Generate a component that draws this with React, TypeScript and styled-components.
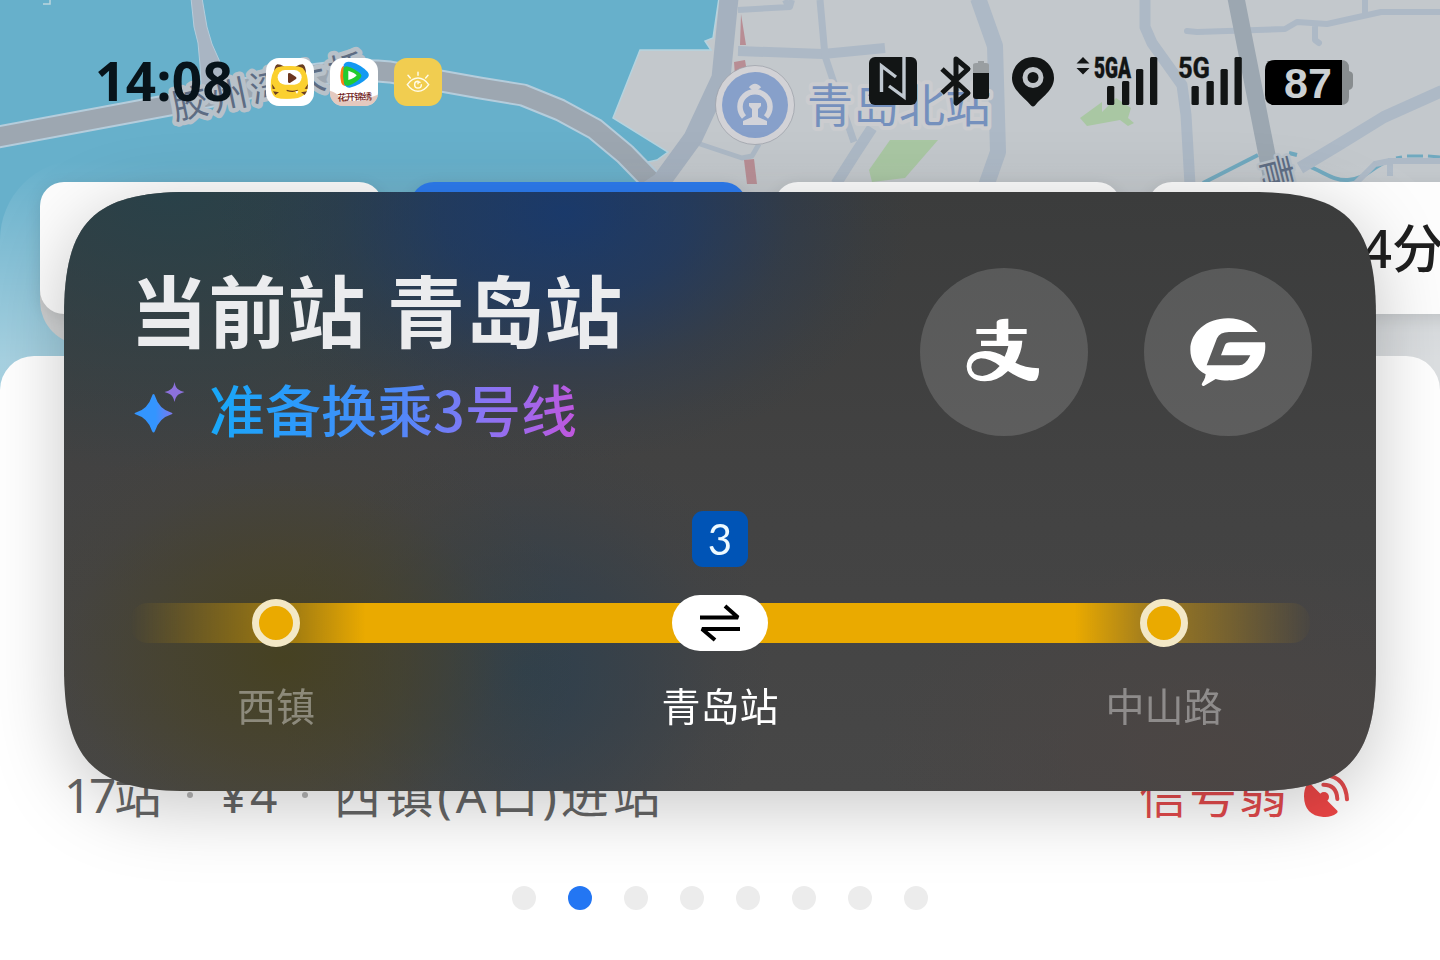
import styled, { createGlobalStyle, css } from "styled-components";

const GlobalStyle = createGlobalStyle`
  * {
    box-sizing: border-box;
  }

  body {
    margin: 0;
    font-family: "Noto Sans", "Noto Sans CJK SC", sans-serif;
  }
`;

const Screen = styled.main`
  position: relative;
  width: 1440px;
  height: 960px;
  overflow: hidden;
  background: #67b0cb;
`;

const MapCanvas = styled.svg`
  position: absolute;
  inset: 0;
  font-family: "Noto Sans CJK SC", sans-serif;
`;

const MapFade = styled.div`
  position: absolute;
  inset: 160px 0 0;
  border-radius: 80px 80px 0 0;
  background: linear-gradient(
    rgba(255, 255, 255, 0) 0,
    rgba(255, 255, 255, 0.06) 30px,
    rgba(255, 255, 255, 0.42) 200px
  );
`;

const Page = styled.div`
  position: relative;
  display: flex;
  flex-direction: column;
  height: 100%;
`;

const StatusBar = styled.header`
  display: flex;
  flex: none;
  justify-content: space-between;
  height: 182px;
  padding: 56px 87px 0 95px;
`;

const StatusGroup = styled.div<{ gap: number }>`
  display: flex;
  align-items: center;
  height: 50px;
  gap: ${(props) => props.gap}px;
`;

const Clock = styled.time`
  width: 155px;
  margin-top: -1px;
  color: #07131a;
  font: 700 53px/50px "Noto Sans", sans-serif;
  letter-spacing: 0.4px;
`;

const StatusSvg = styled.svg`
  flex: none;
  height: 50px;
  overflow: visible;
  fill: #121515;
`;

const AppIcon = styled.svg`
  flex: none;
  width: 48px;
  height: 48px;
  margin-top: 2px;
  border-radius: 13px;
`;

const Tabs = styled.nav`
  display: flex;
  flex: none;
  gap: 27px;
  width: 1500px;
  height: 174px;
  padding-left: 40px;
  isolation: isolate;
`;

const Tab = styled.div<{ active?: boolean; stacked?: boolean; width: number }>`
  position: relative;
  display: flex;
  flex: none;
  align-items: center;
  justify-content: flex-end;
  width: ${(props) => props.width}px;
  height: 132px;
  padding-right: 56px;
  border-radius: 24px;
  background: ${(props) => (props.active ? "#2d7cf0" : "#fdfdfd")};
  box-shadow: 0 4px 16px rgba(0, 0, 0, 0.1);
  color: #1f1f1f;
  font: 500 52px/1 "Noto Sans", "Noto Sans CJK SC", sans-serif;
  white-space: nowrap;

  /* a second card peeking out from under this one */
  ${(props) =>
    props.stacked &&
    css`
      &::before {
        content: "";
        position: absolute;
        inset: 60px 0 -31px;
        z-index: -1;
        border-radius: 0 0 44px 44px;
        background: #d2d4d5;
      }
    `}
`;

const Sheet = styled.section`
  display: flex;
  flex: 1;
  flex-direction: column;
  align-items: center;
  padding: 410px 91px 0 64px;
  border-radius: 34px 34px 0 0;
  background: #fff;
`;

const RouteInfo = styled.div`
  display: flex;
  align-items: center;
  align-self: stretch;
  height: 58px;
  color: #666;
  font: 400 48px/58px "Noto Sans", "Noto Sans CJK SC", sans-serif;
  white-space: nowrap;
`;

const RouteText = styled.span<{ spacing: number }>`
  letter-spacing: ${(props) => props.spacing}px;
`;

const Bullet = styled.i<{ left: number; right: number }>`
  width: 6px;
  height: 6px;
  margin: 0 ${(props) => props.right}px 0 ${(props) => props.left}px;
  border-radius: 50%;
  background: #b5b5b5;
`;

const WeakSignal = styled.div`
  display: flex;
  align-items: center;
  gap: 15px;
  margin-right: -1px;
  margin-left: auto;
  color: #e34a4c;
  letter-spacing: 2px;
`;

const Pager = styled.div`
  display: flex;
  gap: 32px;
  margin-top: 62px;
  /* the sheet padding is uneven, this brings the dots back to the middle */
  padding-left: 27px;
`;

const PagerDot = styled.span<{ active: boolean }>`
  width: 24px;
  height: 24px;
  border-radius: 50%;
  background: ${(props) => (props.active ? "#2376f3" : "#ececec")};
`;

const PanelShadow = styled.div`
  position: absolute;
  top: 192px;
  left: 64px;
  filter: drop-shadow(0 16px 36px rgba(0, 0, 0, 0.22));
`;

const Panel = styled.article`
  display: flex;
  flex-direction: column;
  width: 1312px;
  height: 599px;
  padding: 76px 66px 0;
  clip-path: path(
    "M0 124 C0 30 30 0 124 0 H1188 C1282 0 1312 30 1312 124 V475 C1312 569 1282 599 1188 599 H124 C30 599 0 569 0 475 Z"
  );
  background: radial-gradient(
      ellipse 350px 250px at 500px 20px,
      rgba(22, 57, 112, 0.88),
      rgba(24, 57, 108, 0.66) 35%,
      rgba(28, 57, 98, 0.28) 65%,
      rgba(32, 58, 88, 0.08) 87%,
      transparent
    ),
    radial-gradient(
      ellipse 460px 280px at 110px 0,
      rgba(38, 66, 75, 0.85),
      rgba(40, 66, 75, 0.4) 55%,
      transparent
    ),
    radial-gradient(
      ellipse 290px 240px at 220px 465px,
      rgba(70, 65, 32, 0.95),
      rgba(72, 66, 38, 0.62) 42%,
      rgba(72, 66, 48, 0.2) 75%,
      transparent
    ),
    radial-gradient(
      ellipse 250px 240px at 460px 480px,
      rgba(42, 63, 79, 0.85),
      rgba(46, 62, 76, 0.5) 45%,
      rgba(52, 62, 73, 0.15) 78%,
      transparent
    ),
    radial-gradient(
      ellipse 340px 200px at 1150px 560px,
      rgba(76, 69, 67, 0.85),
      transparent
    ),
    linear-gradient(#3b3c3c, #424242 45%, #474747);
`;

const PanelHeader = styled.header`
  display: flex;
  justify-content: space-between;
  height: 235px;
`;

const Title = styled.h1`
  margin: 0;
  color: #ebecee;
  font: 700 78px/80px "Noto Sans CJK SC", sans-serif;
  letter-spacing: 0.6px;
  word-spacing: 3px;
`;

const Hint = styled.div`
  display: flex;
  align-items: flex-start;
  margin-top: 34px;
  padding-left: 4px;
`;

const HintText = styled.p`
  margin: -9px 0 0 23px;
  background: linear-gradient(
    100deg,
    #16a9f8 0%,
    #2f98fb 28%,
    #5088f8 52%,
    #8a74f3 75%,
    #c255dd 100%
  );
  background-clip: text;
  color: transparent;
  font: 500 56px/70px "Noto Sans CJK SC", sans-serif;
`;

const Actions = styled.div`
  display: flex;
  gap: 56px;
  margin-right: -2px;
`;

const RoundButton = styled.button`
  width: 168px;
  height: 168px;
  padding: 0;
  border: 0;
  border-radius: 50%;
  background: rgba(255, 255, 255, 0.15);

  svg {
    display: block;
    fill: #fff;
  }
`;

const Line = styled.div`
  display: flex;
  justify-content: space-between;
  padding: 0 82px;
`;

const Stop = styled.div`
  display: flex;
  flex-direction: column;
  align-items: center;
  width: 128px;
`;

const BadgeSlot = styled.div`
  height: 84px;
`;

const LineBadge = styled.span`
  display: block;
  width: 56px;
  height: 56px;
  margin-top: 8px;
  border-radius: 11px;
  background: #0054b6;
  color: #eefaff;
  font: 400 42px/56px Lato, sans-serif;
  text-align: center;
`;

const Track = styled.div`
  display: flex;
  align-items: center;
  justify-content: space-between;
  height: 40px;
  margin-top: 16px;
  padding: 0 122px;
  border-radius: 18px;
  background: linear-gradient(
    90deg,
    rgba(234, 170, 0, 0) 0,
    rgba(234, 170, 0, 0.42) 122px,
    rgba(234, 170, 0, 0.6) 170px,
    #eaaa00 235px,
    #eaaa00 945px,
    rgba(234, 170, 0, 0.6) 1010px,
    rgba(234, 170, 0, 0.42) 1058px,
    rgba(234, 170, 0, 0.02) 1180px
  );
`;

const StopDot = styled.span`
  width: 48px;
  height: 48px;
  border: 7px solid #f3e8c6;
  border-radius: 50%;
  background: #eaaa00;
`;

const TransferPill = styled.span`
  display: flex;
  align-items: center;
  justify-content: center;
  width: 96px;
  height: 56px;
  border-radius: 28px;
  background: #fff;
`;

const StopName = styled.span<{ current?: boolean }>`
  margin-top: 35px;
  color: ${(props) => (props.current ? "#fff" : "rgba(255, 255, 255, 0.38)")};
  font: 400 39px/52px "Noto Sans CJK SC", sans-serif;
  white-space: nowrap;
`;

const stops = [
  { name: "西镇" },
  { name: "青岛站", transfer: "3" },
  { name: "中山路" },
];

const CityMap = () => (
  <MapCanvas width="1440" height="960" viewBox="0 0 1440 960">
    <path
      fill="#c3c8cc"
      stroke="#b5d3df"
      strokeWidth="1.5"
      d="M719-2 713 38 705 41 711 50H640L613 118 668 152 657 160 643 163 660 200V400H1442V-2Z"
    />
    <g fill="#a9c7a3">
      <path d="M890 140h48l-33 38-33 4-3-12z" />
      <path d="m1080 118 22-16v10l14-14 15 10-3 10 6 5-6 3-8-6-33 6z" />
    </g>
    <g fill="none" stroke="#70a9bf" strokeWidth="4">
      <path d="m1203 183 55-28m31-2 8 2m9 10c20 8 28 16 42 15 18-1 22-12 42-20" />
      <path d="m1396 158 6-1m5-1h16m5 0 12 1" strokeWidth="3" />
    </g>
    <g fill="none" stroke="#adb9c6" strokeLinejoin="round">
      <path strokeWidth="10" d="m738 51 85 3 62-6" />
      <path strokeWidth="6" d="m738 10 52-3 2-7m-7 0 3 6" />
      <path strokeWidth="7" d="m820 0 5 56 12 36 17 50" />
      <path strokeWidth="11" d="m872 128-17 26-19 30" />
      <path strokeWidth="5" d="m697 143 45 15 10-2 7-12" />
      <path strokeWidth="16" d="m978-2 17 48 3 106-12 34" />
      <path strokeWidth="11" d="M1145 0v27l7 16 30 42 4 30 4 70" />
      <path
        strokeWidth="6"
        strokeLinecap="round"
        d="m1187 31 10 1 88-3 12-7 30 2 54-12h62M1365 0v14m-50 10v16l4 3"
      />
      <path strokeWidth="12" d="m1300 168 40-24 44-27 58-26" />
      <path strokeWidth="6" d="m1355 184 20-20 15-3h50m-50 0v15m-105 8-20-6" />
    </g>
    <path fill="#b88d94" d="m741 14 5 31h-6zm-7 48 11-2 2 12-12 4z" />
    <path fill="#b88d94" d="m744 160 10-1 3 25h-10z" />
    <g fill="none" strokeLinejoin="round">
      <path
        stroke="#b5cddc"
        strokeWidth="23"
        d="M-2 137 170 105 300 77Q350 68 390 72L480 88 523 95 560 110 595 129 625 154 660 190"
      />
      <path
        fill="#a9b5c3"
        stroke="#b5cddc"
        d="M191-2h11l5 29 5 17 8 18 16 30-34 6-2-33-2-22-4-16z"
      />
      <path
        stroke="#9da7b1"
        strokeWidth="19"
        d="M-2 137 170 105 300 77Q350 68 390 72L480 88 523 95 560 110 595 129 625 154 660 190"
      />
      <path
        stroke="#a5b1bf"
        strokeWidth="19"
        d="m729-2-8 80-28 60-32 44-18 12"
      />
      <path stroke="#9ca7b1" strokeWidth="17" d="m1236-2 32 162 6 30" />
    </g>
    <path d="m50 0v4h-7" fill="none" stroke="#bcd5de" strokeWidth="1.5" />
    <g stroke="#b8c1c9" strokeWidth="9" strokeLinejoin="round" paintOrder="stroke" fill="#5d6c83">
      <text transform="translate(175 120) rotate(-12)" fontSize="36" letterSpacing="4">
        胶州湾大桥
      </text>
      <text transform="translate(1260 158) rotate(76)" fontSize="35" strokeWidth="5">
        青
      </text>
    </g>
    <circle cx="755" cy="105" r="39.5" fill="#d2d2d6" stroke="#999da6" strokeWidth=".7" />
    <circle cx="755" cy="105" r="33" fill="#87a0ca" />
    <g fill="none" stroke="#d2d3d9" strokeWidth="5.5">
      <path d="M744 117a15 15 0 1 1 22 0" />
      <path d="M751 89q4-5 8 0" />
    </g>
    <path fill="#d2d3d9" d="M749 103h12v3l-3 3v8l9 4v4h-24v-4l9-4v-8l-3-3z" />
    <text
      x="807"
      y="122"
      fontSize="46"
      fill="#7590bd"
      stroke="#cbcccf"
      strokeWidth="8"
      strokeLinejoin="round"
      paintOrder="stroke"
    >
      青岛北站
    </text>
  </MapCanvas>
);

const TigerApp = () => (
  <AppIcon viewBox="0 0 144 144">
    <rect width="144" height="144" fill="#fff" />
    <path fill="#6b3f22" d="M24 46Q25 22 34 19q9 0 22 7zM120 46q-1-24-10-27-9 0-22 7z" />
    <path fill="#fbd02f" d="M18 82Q18 46 36 30q8-5 36-5t36 5q18 16 18 52 0 40-54 40h-20Q18 122 18 82z" transform="translate(-2 0) scale(.9 1)" />
    <path fill="#fbd02f" d="M18 80q0-34 16-50 8-6 38-6t38 6q16 16 16 50 0 42-54 42T18 80z" />
    <path fill="#6b3f22" d="m18 78 10 14-8 1zm3 22 18 3-11 8zm105-22-10 14 8 1zm-3 22-18 3 11 8z" />
    <rect x="35" y="36" width="72" height="44" rx="22" fill="#fff" />
    <path fill="#6b3520" d="M66 47q2-4 7-1l17 11q3 3 0 6L73 74q-5 3-7-2z" />
    <path d="M62 97q18 6 33 0" fill="none" stroke="#6b3f22" strokeWidth="3.5" />
    <path fill="#fff" d="m88 100 9-1-4 9z" />
  </AppIcon>
);

const VideoApp = () => (
  <AppIcon viewBox="0 0 144 144">
    <rect width="144" height="144" fill="#fff" />
    <path fill="#c9937f" d="M0 98q22 6 28 20 30 14 66 10l50-18v34H0z" opacity=".5" />
    <path fill="#ff7a13" d="M34 32q4-11 16-9v60q-12 3-16-8-6-22 0-43z" />
    <path fill="#1499f2" d="M41 20q6-12 22-8 30 8 50 30 7 9 0 17-22 22-54 30-12 0-17-12z" />
    <path fill="#23cb2f" d="M41 30q5-7 14-4 22 7 37 22 5 5 0 11-14 16-37 24-10 2-13-8-5-22-1-45z" />
    <path fill="#fff" d="M55 38q20 7 25 14-5 8-25 14z" />
    <text
      x="22"
      y="127"
      fill="#6f1a18"
      fontFamily="Noto Sans CJK SC, sans-serif"
      fontSize="28"
      fontWeight="500"
      textLength="104"
      transform="rotate(-2 72 120)"
    >
      花开锦绣
    </text>
  </AppIcon>
);

const EyeApp = () => (
  <AppIcon viewBox="0 0 144 144">
    <rect width="144" height="144" fill="#f1cd50" />
    <g fill="none" stroke="#fffbe6" strokeWidth="4.5" strokeLinecap="round">
      <path d="M40 80q14-20 32-20t32 20q-14 20-32 20T40 80z" />
      <path d="M72 70a10 10 0 1 0 10 10M72 77a4 4 0 0 1 6-4" />
      <path d="m42 52 7 8M72 43v9m30 0-7 8" />
    </g>
  </AppIcon>
);

const SignalBars = ({ x }: { x: number }) => (
  <g>
    <rect x={x} y="30" width="7.3" height="19" rx="1.5" />
    <rect x={x + 15} y="25" width="7.3" height="24" rx="1.5" />
    <rect x={x + 29} y="13" width="7.3" height="36" rx="1.5" />
    <rect x={x + 43} y="1" width="7.3" height="48" rx="1.5" />
  </g>
);

const StatusIcons = () => (
  <StatusGroup gap={23}>
    <StatusSvg width="48" viewBox="0 0 48 50">
      <rect y="1" width="48" height="48" rx="6" />
      <path
        d="M12.5 36V10L27 21M20 30l15 11V1"
        fill="none"
        stroke="#c0c8d0"
        strokeWidth="3.4"
      />
    </StatusSvg>
    <StatusSvg width="49" viewBox="0 0 49 50">
      <path
        d="m2 13 26 24-12 10V3l12 10L2 37"
        fill="none"
        stroke="#121515"
        strokeWidth="5"
        strokeLinejoin="round"
      />
      <path d="M33 19V9q0-2 3-2h2V5h6v2h2q3 0 3 2v10z" fill="#999ea1" />
      <path d="M33 17h16v23q0 3-3 3H36q-3 0-3-3z" />
    </StatusSvg>
    <StatusSvg width="42" viewBox="0 0 42 50">
      <path d="M21 1a21 21 0 0 1 21 21c0 12-12 19-19 27.500q-2 2-4 0C12 41 0 34 0 22A21 21 0 0 1 21 1z" />
      <circle cx="21" cy="21.500" r="8" fill="none" stroke="#c0c5c9" strokeWidth="5" />
    </StatusSvg>
    <StatusSvg width="81" viewBox="0 0 81 50">
      <path d="m6 1 6.500 6.500h-13zM-.5 12h13L6 18.500z" />
      <text
        x="17"
        y="21.500"
        fontFamily="Roboto, sans-serif"
        fontSize="29"
        fontWeight="900"
        textLength="37"
        lengthAdjust="spacingAndGlyphs"
        stroke="#121515"
        strokeWidth=".5"
      >
        5GA
      </text>
      <SignalBars x={30} />
    </StatusSvg>
    <StatusSvg width="61" viewBox="0 0 61 50">
      <text
        x="-3"
        y="21.500"
        fontFamily="Roboto, sans-serif"
        fontSize="29"
        fontWeight="700"
        textLength="32"
        lengthAdjust="spacingAndGlyphs"
        stroke="#121515"
        strokeWidth=".4"
      >
        5G
      </text>
      <SignalBars x={10.5} />
    </StatusSvg>
    <StatusSvg width="88" viewBox="0 0 88 50">
      <path d="M76 4q8 0 8 8v3q4 1 4 4v10q0 4-4 5v7q0 8-8 8z" fill="#888d8f" />
      <path d="M10 4h67v45H10Q0 49 0 39V14Q0 4 10 4z" fill="#000" />
      <text
        x="19"
        y="42"
        fill="#cbd0d3"
        fontFamily="Liberation Sans, sans-serif"
        fontSize="43"
        fontWeight="700"
      >
        87
      </text>
    </StatusSvg>
  </StatusGroup>
);

const Sparkles = () => (
  <svg width="52" height="52" viewBox="0 0 52 52">
    <defs>
      <linearGradient id="spark" x1="0" x2="1">
        <stop offset=".55" stopColor="#3395ff" />
        <stop offset="1" stopColor="#7c78ee" />
      </linearGradient>
    </defs>
    <path
      fill="url(#spark)"
      d="M19.500 12q1 0 1.500 2 4 13 16 16.500 3 1 0 2Q25 36 21 49q-1.500 3-3 0Q14 36 2 32.500q-3-1 0-2Q14 27 18 14q.5-2 1.500-2z"
    />
    <path
      fill="#8c71dc"
      d="M40.500 0q1 6 4 7.500 2 1.500 6 2.500-4 1-6 2.500-3 2-4 7.500-1-5.500-4-7.500-2-1.500-6-2.500 4-1 6-2.500 3-1.500 4-7.500z"
    />
  </svg>
);

const AlipayIcon = () => (
  <svg width="168" height="168" viewBox="-105 -111 504 504">
    <path
      fillRule="evenodd"
      d="M125 50Q129 40 160 41V72h55v15h-55v20h42q-2 36-21 66 28 15 71 17 1 24-8 35-4 5-24 2-32-9-61-29-31 31-70 31-52-1-54-45 3-44 55-46 32 0 59 17 8-16 11-32H78v-16h47V87H64V72h61ZM134 183Q105 160 78 160q-28 4-29 27 2 25 33 26 30-4 52-30Z"
    />
  </svg>
);

const BubbleIcon = () => (
  <svg width="168" height="168" viewBox="567 -111 504 504">
    <path d="M908 81C885 52 855 40 818 40c-63 0-112 42-112 94 0 31 16 58 46 74-1 14-9 23-12 30q1 7 8 4l34-20c88 22 158-40 148-110H826q-13 0-17 10l-11 29h88q-14 30-34 30h-97l31-81q9-19 36-19Z" />
  </svg>
);

const DishIcon = () => (
  <svg width="46" height="46" viewBox="912 638 138 138" fill="#ee4646">
    <path d="M929 671 1012 754q3 4-2 8-18 13-40 11-57-4-58-62 0-22 10-37 3-6 7-3z" />
    <circle cx="972" cy="713" r="15" />
    <g fill="none" stroke="#e34a4c" strokeWidth="12" strokeLinecap="round">
      <path d="M970 676q40 0 42 43" />
      <path d="M975 647q62 6 66 73" />
    </g>
  </svg>
);

const TransferArrows = () => (
  <svg
    width="40"
    height="38"
    viewBox="0 0 40 38"
    fill="none"
    stroke="#000"
    strokeWidth="4"
    strokeLinejoin="bevel"
  >
    <path d="M0 13.500h38L25 2" />
    <path d="M40 25H2l13 11" />
  </svg>
);

const App = () => (
  <Screen>
    <GlobalStyle />
    <CityMap />
    <MapFade />

    <Page>
      <StatusBar>
        <StatusGroup gap={16}>
          <Clock>14:08</Clock>
          <TigerApp />
          <VideoApp />
          <EyeApp />
        </StatusGroup>
        <StatusIcons />
      </StatusBar>

      <Tabs>
        <Tab width={343} stacked />
        <Tab width={337} active />
        <Tab width={347} />
        <Tab width={352}>4分</Tab>
      </Tabs>

      <Sheet>
        <RouteInfo>
          <RouteText spacing={-2.5}>17站</RouteText>
          <Bullet left={28} right={26} />
          <RouteText spacing={3}>¥4</RouteText>
          <Bullet left={22} right={25} />
          <RouteText spacing={4}>西镇(A口)进站</RouteText>
          <WeakSignal>
            信号弱
            <DishIcon />
          </WeakSignal>
        </RouteInfo>
        <Pager>
          {Array.from({ length: 8 }, (_, index) => (
            <PagerDot key={index} active={index === 1} />
          ))}
        </Pager>
      </Sheet>
    </Page>

    <PanelShadow>
      <Panel>
        <PanelHeader>
          <div>
            <Title>当前站 青岛站</Title>
            <Hint>
              <Sparkles />
              <HintText>准备换乘3号线</HintText>
            </Hint>
          </div>
          <Actions>
            <RoundButton>
              <AlipayIcon />
            </RoundButton>
            <RoundButton>
              <BubbleIcon />
            </RoundButton>
          </Actions>
        </PanelHeader>

        <Line>
          {stops.map((stop) => (
            <Stop key={stop.name}>
              <BadgeSlot>
                {stop.transfer && <LineBadge>{stop.transfer}</LineBadge>}
              </BadgeSlot>
            </Stop>
          ))}
        </Line>
        <Track>
          {stops.map((stop) =>
            stop.transfer ? (
              <TransferPill key={stop.name}>
                <TransferArrows />
              </TransferPill>
            ) : (
              <StopDot key={stop.name} />
            )
          )}
        </Track>
        <Line>
          {stops.map((stop) => (
            <Stop key={stop.name}>
              <StopName current={!!stop.transfer}>{stop.name}</StopName>
            </Stop>
          ))}
        </Line>
      </Panel>
    </PanelShadow>
  </Screen>
);

export default App;
